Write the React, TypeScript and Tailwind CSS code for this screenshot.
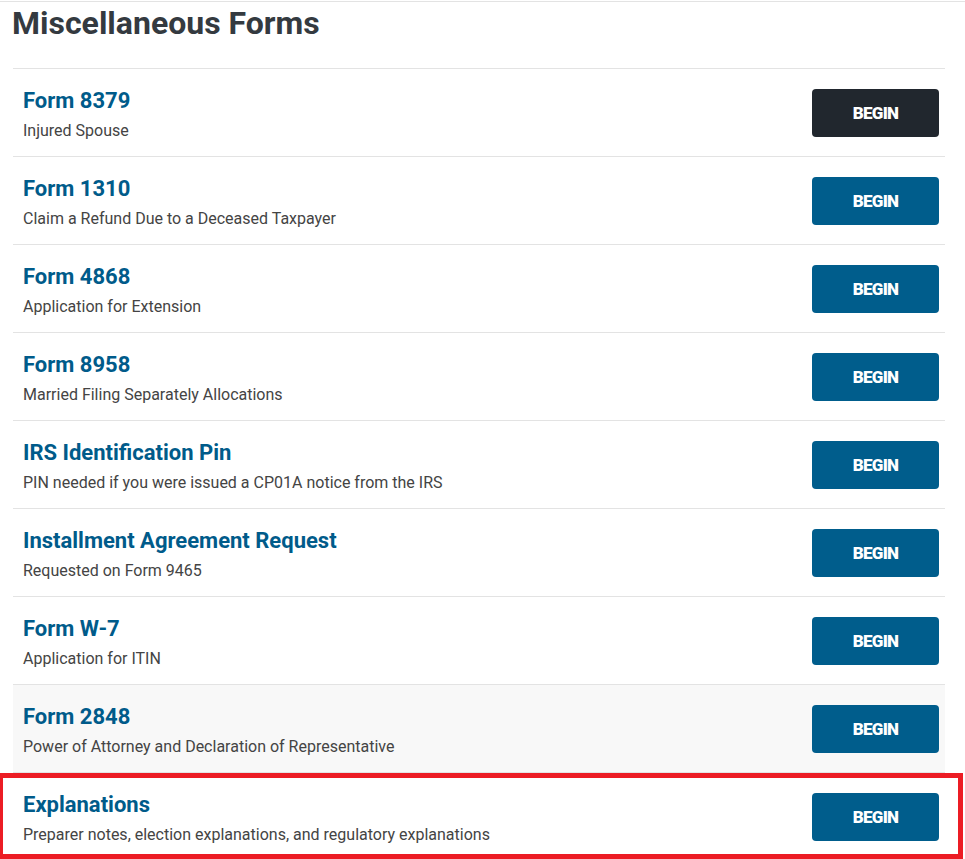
import React from "react";

type FormItem = {
  title: string;
  description: string;
  dark?: boolean;
  hovered?: boolean;
  highlighted?: boolean;
};

const forms: FormItem[] = [
  { title: "Form 8379", description: "Injured Spouse", dark: true },
  { title: "Form 1310", description: "Claim a Refund Due to a Deceased Taxpayer" },
  { title: "Form 4868", description: "Application for Extension" },
  { title: "Form 8958", description: "Married Filing Separately Allocations" },
  { title: "IRS Identification Pin", description: "PIN needed if you were issued a CP01A notice from the IRS" },
  { title: "Installment Agreement Request", description: "Requested on Form 9465" },
  { title: "Form W-7", description: "Application for ITIN" },
  { title: "Form 2848", description: "Power of Attorney and Declaration of Representative", hovered: true },
  {
    title: "Explanations",
    description: "Preparer notes, election explanations, and regulatory explanations",
    highlighted: true,
  },
];

function FormRow({ item }: { item: FormItem }) {
  return (
    <div
      className={`relative flex h-[88px] items-start justify-between border-b border-[#e3e3e3] pl-[10px] pr-[6px] ${
        item.hovered ? "bg-[#f8f8f8]" : "bg-white"
      }`}
    >
      <div className="pt-[19px]">
        <div className="text-[22px] font-bold leading-[26px] text-[#005b8a]">{item.title}</div>
        <div className="mt-[5px] text-[16px] leading-[24px] text-[#444444]">{item.description}</div>
      </div>
      <button
        type="button"
        className={`self-center flex h-[48px] w-[127px] items-center justify-center rounded-[4px] pt-[2px] text-[17px] font-black tracking-[-0.7px] text-white ${
          item.dark ? "bg-[#21272e]" : "bg-[#005d8c]"
        }`}
      >
        BEGIN
      </button>
      {item.highlighted && (
        <div className="pointer-events-none absolute left-[-15px] right-[-18px] top-0 h-[86px] border-[5px] border-[#ec1c24]" />
      )}
    </div>
  );
}

export default function App() {
  return (
    <div className="min-h-[859px] overflow-hidden bg-white font-['Roboto',_'Liberation_Sans',_sans-serif]">
      <div className="mt-px h-px bg-[#e3e3e3]" />
      <div className="pl-[13px] pr-[20px]">
        <h1 className="ml-[-1px] mt-[2px] text-[32px] font-bold leading-[38px] text-[#343a40]">
          Miscellaneous Forms
        </h1>
        <div className="mt-[26px] border-t border-[#e3e3e3]">
          {forms.map((f) => (
            <FormRow key={f.title} item={f} />
          ))}
        </div>
      </div>
    </div>
  );
}
